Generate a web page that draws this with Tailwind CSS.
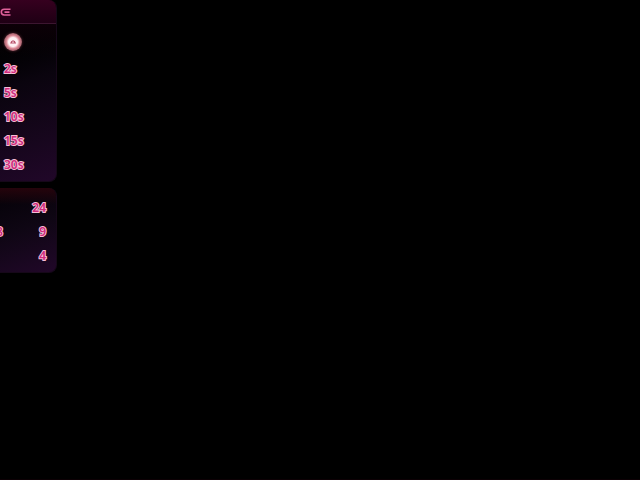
<!DOCTYPE html>
<html lang="en">
<head>
<meta charset="utf-8">
<title>Timers</title>
<script src="https://cdn.jsdelivr.net/npm/@tailwindcss/browser@4"></script>
</head>
<body class="min-h-screen overflow-hidden bg-black border-b border-[#0c0004] text-xs leading-6 font-semibold text-[#cf2a7c] font-['Noto_Sans','Open_Sans',sans-serif]">
<main class="flex w-[57px] flex-col gap-1.5 [-webkit-text-stroke:2px_#f6bdd6] [paint-order:stroke_fill]">
  <section class="overflow-hidden rounded-r-lg border-r border-b border-[#160819] bg-linear-160 from-black via-[#0a040e] via-45% to-[#210729] pb-1">
    <header class="flex h-6 items-center border-b border-[#3c1630] bg-linear-to-b from-[#36001f] to-[#1f0014]">
      <button type="button" aria-label="Menu">
        <svg class="block h-3 w-3" viewBox="0 0 12 12" fill="none" stroke="#e0609a" stroke-width="1.6"><path d="M10.500 3.200H4.200a2.900 2.900 0 0 0 0 5.800H10.500M4.500 6.100h5"/></svg>
      </button>
    </header>
    <div class="flex h-[33px] items-center bg-linear-to-b from-[#0c0007] to-transparent pb-0.5 pt-1 pl-1">
      <button type="button" aria-label="Timer" class="flex size-[18px] items-center justify-center rounded-full bg-radial from-[#fff0f3] from-35% via-[#d98794] via-52% to-[#4a2028] shadow-[0_0_3px_#5c2832]">
        <svg class="size-3" viewBox="0 0 12 12" fill="none" stroke="#b8506a" stroke-width="1.2"><path d="M4 7h4.200L7.400 5.400 6 4.800 4.600 5.600z"/></svg>
      </button>
    </div>
    <div class="flex flex-col items-start pl-1">
      <button type="button">2s</button>
      <button type="button">5s</button>
      <button type="button">10s</button>
      <button type="button">15s</button>
      <button type="button">30s</button>
    </div>
  </section>
  <section class="overflow-hidden rounded-r-lg border-r border-b border-[#160819] bg-linear-160 from-[#050207] via-[#0e0613] via-45% to-[#210729]">
    <div class="bg-linear-to-b from-[#26040c] to-transparent to-20% pt-2 pr-2.5 pb-1">
    <table class="-ml-1 w-[calc(100%+4px)] border-collapse">
      <tbody>
        <tr><td class="p-0"></td><td class="p-0 text-right">24</td></tr>
        <tr><td class="p-0">8</td><td class="p-0 text-right">9</td></tr>
        <tr><td class="p-0"></td><td class="p-0 text-right">4</td></tr>
      </tbody>
    </table>
    </div>
  </section>
</main>
</body>
</html>
